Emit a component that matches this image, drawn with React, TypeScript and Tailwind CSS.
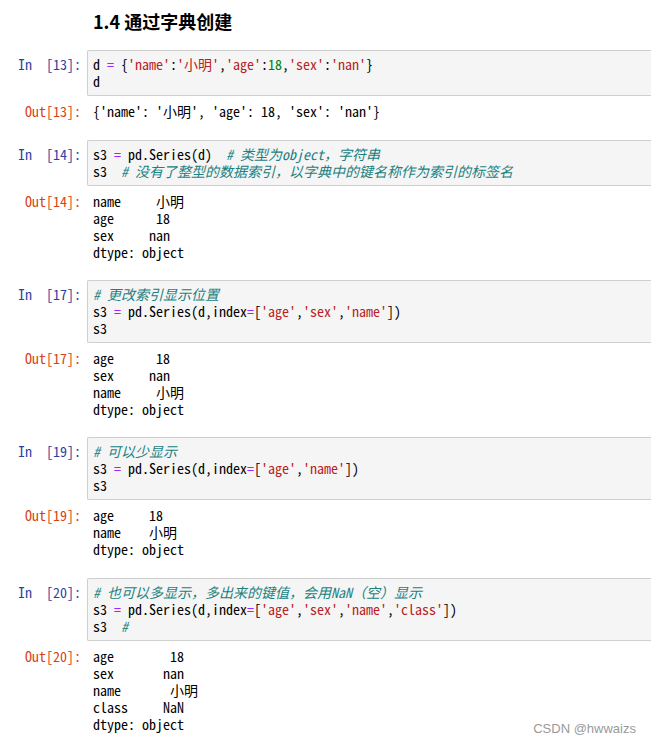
import React from "react";

const MONO = "font-['Noto_Sans_Mono_CJK_SC','Noto_Sans_Mono_CJK_TC','Liberation_Mono',monospace]";

type Tok = [string, string?];

const S = "text-[#BA2121]";
const N = "text-[#008000]";
const O = "text-[#AA22FF]";
const C = "text-[#207f7f] italic";

function Line({ toks }: { toks: Tok[] }) {
  return (
    <div className="h-[17px] leading-[17px] whitespace-pre">
      {toks.map((t, i) => (
        <span key={i} className={t[1] ?? ""}>
          {t[0]}
        </span>
      ))}
    </div>
  );
}

function Cell({
  n,
  code,
  out,
  mb,
}: {
  n: number;
  code: Tok[][];
  out: string[];
  mb: string;
}) {
  return (
    <div className={`${MONO} text-[14px] ${mb}`}>
      <div className="flex">
        <div className="w-[87px] shrink-0 pr-[6px] pt-[6px] text-right text-[#303F9F] leading-[17px] whitespace-pre">
          {`In  [${n}]:`}
        </div>
        <div className="flex-1 bg-[#f5f5f5] border border-r-0 border-[#cfcfcf] rounded-l-[2px] py-[5px] pl-[5px] text-black">
          {code.map((l, i) => (
            <Line key={i} toks={l} />
          ))}
        </div>
      </div>
      <div className="flex mt-[7px]">
        <div className="w-[87px] shrink-0 pr-[6px] text-right text-[#D84315] h-[17px] leading-[17px] whitespace-pre">
          {`Out[${n}]:`}
        </div>
        <div className="pl-[6px] text-black">
          {out.map((l, i) => (
            <div key={i} className="h-[17px] leading-[17px] whitespace-pre">
              {l}
            </div>
          ))}
        </div>
      </div>
    </div>
  );
}

export default function App() {
  return (
    <div className="relative w-[651px] h-[743px] overflow-hidden bg-white">
      <div className="pl-[93px] pt-[10px] h-[50px]">
        <div className="font-['Noto_Sans_CJK_SC','Liberation_Sans',sans-serif] font-bold text-[18px] leading-[22px] text-black">
          1.4 通过字典创建
        </div>
      </div>

      <Cell
        n={13}
        mb="mb-[20px]"
        code={[
          [["d "], ["=", O], [" {"], ["'name'", S], [":"], ["'小明'", S], [","], ["'age'", S], [":"], ["18", N], [","], ["'sex'", S], [":"], ["'nan'", S], ["}"]],
          [["d"]],
        ]}
        out={["{'name': '小明', 'age': 18, 'sex': 'nan'}"]}
      />

      <Cell
        n={14}
        mb="mb-[19px]"
        code={[
          [["s3 "], ["=", O], [" pd.Series(d)  "], ["# 类型为object，字符串", C]],
          [["s3  "], ["# 没有了整型的数据索引，以字典中的键名称作为索引的标签名", C]],
        ]}
        out={["name     小明", "age      18", "sex     nan", "dtype: object"]}
      />

      <Cell
        n={17}
        mb="mb-[19px]"
        code={[
          [["# 更改索引显示位置", C]],
          [["s3 "], ["=", O], [" pd.Series(d,index"], ["=", O], ["["], ["'age'", S], [","], ["'sex'", S], [","], ["'name'", S], ["])"]],
          [["s3"]],
        ]}
        out={["age      18", "sex     nan", "name     小明", "dtype: object"]}
      />

      <Cell
        n={19}
        mb="mb-[20px]"
        code={[
          [["# 可以少显示", C]],
          [["s3 "], ["=", O], [" pd.Series(d,index"], ["=", O], ["["], ["'age'", S], [","], ["'name'", S], ["])"]],
          [["s3"]],
        ]}
        out={["age     18", "name    小明", "dtype: object"]}
      />

      <Cell
        n={20}
        mb="mb-0"
        code={[
          [["# 也可以多显示，多出来的键值，会用NaN（空）显示", C]],
          [["s3 "], ["=", O], [" pd.Series(d,index"], ["=", O], ["["], ["'age'", S], [","], ["'sex'", S], [","], ["'name'", S], [","], ["'class'", S], ["])"]],
          [["s3  "], ["#", C]],
        ]}
        out={["age        18", "sex       nan", "name       小明", "class     NaN", "dtype: object"]}
      />

      <div className="absolute right-[15px] bottom-[6px] font-['Liberation_Sans',sans-serif] text-[13px] leading-[16px] text-[#9a9a9a]">
        CSDN @hwwaizs
      </div>
    </div>
  );
}
